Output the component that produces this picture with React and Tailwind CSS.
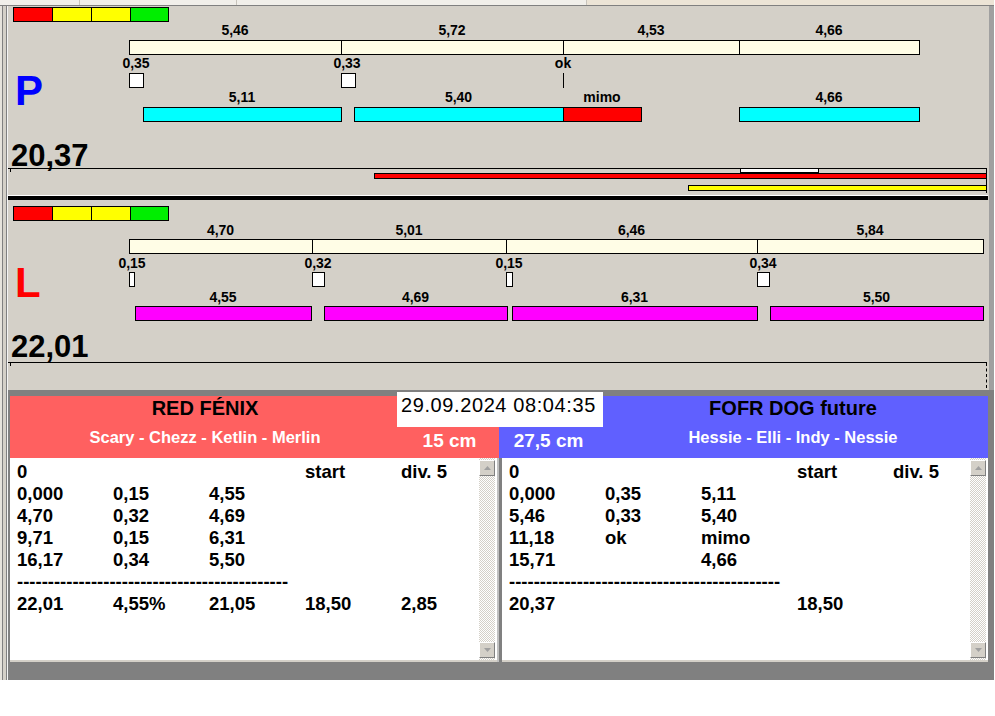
import React from "react";

const FONT = "font-['Liberation_Sans','Arial',sans-serif]";
const px = (x) => x - 8;

const P_DATA = {
  colorTop: 1,
  row1Top: 17,
  creamTop: 34,
  cream: [129, 341, 563, 739, 919],
  creamLabels: ["5,46", "5,72", "4,53", "4,66"],
  row2Top: 50,
  marksTop: 67,
  marks: [
    { c: 136, t: "0,35", x: 129, w: 15 },
    { c: 347, t: "0,33", x: 341, w: 15 },
    { c: 563, t: "ok", x: 563, w: 1, line: true },
  ],
  row3Top: 84,
  barsTop: 101,
  bars: [
    { x1: 143, x2: 341, t: "5,11", c: "bg-[#00ffff]" },
    { x1: 354, x2: 563, t: "5,40", c: "bg-[#00ffff]" },
    { x1: 563, x2: 641, t: "mimo", c: "bg-[#ff0000]" },
    { x1: 739, x2: 919, t: "4,66", c: "bg-[#00ffff]" },
  ],
  letter: "P",
  letterColor: "text-[#0000ff]",
  letterTop: 64,
  total: "20,37",
  totalTop: 134,
};

const L_DATA = {
  colorTop: 6,
  row1Top: 23,
  creamTop: 39,
  cream: [129, 312, 506, 757, 983],
  creamLabels: ["4,70", "5,01", "6,46", "5,84"],
  row2Top: 56,
  marksTop: 72,
  marks: [
    { c: 132, t: "0,15", x: 129, w: 6 },
    { c: 318, t: "0,32", x: 312, w: 13 },
    { c: 509, t: "0,15", x: 506, w: 7 },
    { c: 763, t: "0,34", x: 757, w: 13 },
  ],
  row3Top: 90,
  barsTop: 106,
  bars: [
    { x1: 135, x2: 311, t: "4,55", c: "bg-[#ff00ff]" },
    { x1: 324, x2: 507, t: "4,69", c: "bg-[#ff00ff]" },
    { x1: 512, x2: 757, t: "6,31", c: "bg-[#ff00ff]" },
    { x1: 770, x2: 983, t: "5,50", c: "bg-[#ff00ff]" },
  ],
  letter: "L",
  letterColor: "text-[#ff0000]",
  letterTop: 62,
  total: "22,01",
  totalTop: 131,
};

function Label({ c, top, children }) {
  return (
    <div
      className="absolute w-[120px] text-center text-[14px] leading-none font-bold text-black"
      style={{ left: px(c) - 60, top }}
    >
      {children}
    </div>
  );
}

function ColorScale({ top }) {
  return (
    <div className="absolute left-[5px] flex" style={{ top }}>
      <div className="w-[40px] h-[15px] border border-black bg-[#ff0000]" />
      <div className="w-[40px] h-[15px] border border-black bg-[#ffff00] -ml-px" />
      <div className="w-[40px] h-[15px] border border-black bg-[#ffff00] -ml-px" />
      <div className="w-[39px] h-[15px] border border-black bg-[#00ee00] -ml-px" />
    </div>
  );
}

function Panel({ d, heightClass, children }) {
  const creamSegs = d.cream.slice(0, -1).map((x, i) => ({
    x1: x,
    x2: d.cream[i + 1],
    t: d.creamLabels[i],
  }));
  return (
    <div className={`relative bg-[#d4d0c8] overflow-hidden ${heightClass}`}>
      <ColorScale top={d.colorTop} />
      {creamSegs.map((s, i) => (
        <React.Fragment key={"c" + i}>
          <Label c={(s.x1 + s.x2) / 2} top={d.row1Top}>
            {s.t}
          </Label>
          <div
            className="absolute h-[15px] border border-black bg-[#fffde6]"
            style={{ left: px(s.x1), width: s.x2 - s.x1 + 1, top: d.creamTop }}
          />
        </React.Fragment>
      ))}
      {d.marks.map((m, i) => (
        <React.Fragment key={"m" + i}>
          <Label c={m.c} top={d.row2Top}>
            {m.t}
          </Label>
          {m.line ? (
            <div
              className="absolute w-px h-[15px] bg-black"
              style={{ left: px(m.x), top: d.marksTop }}
            />
          ) : (
            <div
              className="absolute h-[15px] border border-black bg-white"
              style={{ left: px(m.x), width: m.w, top: d.marksTop }}
            />
          )}
        </React.Fragment>
      ))}
      {d.bars.map((b, i) => (
        <React.Fragment key={"b" + i}>
          <Label c={(b.x1 + b.x2) / 2} top={d.row3Top}>
            {b.t}
          </Label>
          <div
            className={`absolute h-[15px] border border-black ${b.c}`}
            style={{ left: px(b.x1), width: b.x2 - b.x1 + 1, top: d.barsTop }}
          />
        </React.Fragment>
      ))}
      <div
        className={`absolute left-[7px] text-[42px] leading-none font-bold ${d.letterColor}`}
        style={{ top: d.letterTop }}
      >
        {d.letter}
      </div>
      <div
        className="absolute left-[3px] text-[31px] leading-none font-bold text-black"
        style={{ top: d.totalTop }}
      >
        {d.total}
      </div>
      {/* timeline box */}
      <div className="absolute left-0 top-[162px] w-[979px] h-px bg-black" />
      <div className="absolute left-[2px] top-[163px] w-px h-[3px] bg-black" />
      {children}
    </div>
  );
}

function Arrow({ up }) {
  return (
    <div className="w-[16px] h-[16px] bg-[#d4d0c8] border border-t-white border-l-white border-r-[#808080] border-b-[#808080] flex items-center justify-center">
      <svg width="7" height="4" viewBox="0 0 7 4">
        {up ? (
          <polygon points="0,4 7,4 3.5,0" fill="#a0a0a0" />
        ) : (
          <polygon points="0,0 7,0 3.5,4" fill="#a0a0a0" />
        )}
      </svg>
    </div>
  );
}

function ScrollBar() {
  return (
    <div className="w-[16px] shrink-0 flex flex-col justify-between py-[2px] bg-[#e9e7e3] bg-[repeating-conic-gradient(#d4d0c8_0_25%,#ffffff_0_50%)] bg-size-[2px_2px]">
      <Arrow up />
      <Arrow />
    </div>
  );
}

const DASHES = "-".repeat(44);

function List({ rows, widthClass }) {
  return (
    <div className={`flex bg-white border-b-2 border-[#d4d0c8] ${widthClass}`}>
      <div className="flex-1 min-w-0 overflow-hidden pl-[7px] pt-[3px] text-[18.5px] font-bold text-black">
        {rows.map((r, i) =>
          r === "dash" ? (
            <div key={i} className="h-[22px] leading-[22px] whitespace-nowrap">
              {DASHES}
            </div>
          ) : (
            <div
              key={i}
              className="grid grid-cols-[96px_96px_96px_96px_96px] h-[22px] leading-[22px] whitespace-nowrap"
            >
              {r.map((c, j) => (
                <div key={j}>{c}</div>
              ))}
            </div>
          )
        )}
      </div>
      <ScrollBar />
      <div className="w-[2px] shrink-0" />
    </div>
  );
}

const LEFT_ROWS = [
  ["0", "", "", "start", "div. 5"],
  ["0,000", "0,15", "4,55"],
  ["4,70", "0,32", "4,69"],
  ["9,71", "0,15", "6,31"],
  ["16,17", "0,34", "5,50"],
  "dash",
  ["22,01", "4,55%", "21,05", "18,50", "2,85"],
];

const RIGHT_ROWS = [
  ["0", "", "", "start", "div. 5"],
  ["0,000", "0,35", "5,11"],
  ["5,46", "0,33", "5,40"],
  ["11,18", "ok", "mimo"],
  ["15,71", "", "4,66"],
  "dash",
  ["20,37", "", "", "18,50"],
];

export default function App() {
  return (
    <div className={`w-[995px] h-[716px] bg-white ${FONT}`}>
      <div className="w-[994px] h-[680px] flex flex-col bg-[#808080]">
        {/* top strip */}
        <div className="h-[6px] bg-[#f1efea] border-b border-[#808080] flex">
          <div className="w-[80px] border-r border-[#c8c4bc]" />
          <div className="w-[157px] border-r border-[#c8c4bc]" />
          <div className="w-[350px] border-r border-[#c8c4bc]" />
          <div className="flex-1 bg-[#ece4d6]" />
        </div>
        <div className="flex flex-1">
          {/* left border */}
          <div className="w-[8px] flex">
            <div className="w-[2px] bg-[#e6e3dc]" />
            <div className="w-px bg-[#808080]" />
            <div className="w-[3px] bg-[#d4d0c8]" />
            <div className="w-px bg-[#808080]" />
            <div className="w-px bg-[#f4f4f4]" />
          </div>
          {/* main column */}
          <div className="w-[980px] flex flex-col">
            <Panel d={P_DATA} heightClass="h-[189px]">
              <div className="absolute left-[366px] top-[167px] w-[613px] h-[6px] border border-black bg-[#ff0000]" />
              <div className="absolute left-[732px] top-[162px] w-[79px] h-[5px] border border-black bg-white" />
              <div className="absolute left-[680px] top-[179px] w-[299px] h-[6px] border border-black bg-[#ffff00]" />
              <div className="absolute left-[978px] top-[162px] w-px h-[25px] bg-black" />
            </Panel>
            <div className="h-px bg-white" />
            <div className="h-[4px] bg-black" />
            <Panel d={L_DATA} heightClass="h-[190px]">
              <div className="absolute left-[978px] top-[163px] h-[25px] border-l border-dashed border-black" />
            </Panel>
            {/* bottom section */}
            <div className="relative flex-1 flex flex-col bg-[#808080] pl-[2px] pt-[6px]">
              <div className="flex h-[62px]">
                <div className="w-[489px] bg-[#ff6060] flex">
                  <div className="w-[390px] flex flex-col items-center">
                    <div className="mt-[2px] text-[20px] leading-none font-bold text-black whitespace-nowrap">
                      RED FÉNIX
                    </div>
                    <div className="mt-[11px] text-[16.5px] leading-none font-bold text-white whitespace-nowrap">
                      Scary - Chezz - Ketlin - Merlin
                    </div>
                  </div>
                  <div className="w-[99px] pt-[35px] text-center text-[19px] leading-none font-bold text-white whitespace-nowrap">
                    15 cm
                  </div>
                </div>
                <div className="w-[489px] bg-[#6060ff] flex">
                  <div className="w-[99px] pt-[35px] text-center text-[19px] leading-none font-bold text-white whitespace-nowrap">
                    27,5 cm
                  </div>
                  <div className="w-[390px] flex flex-col items-center">
                    <div className="mt-[2px] text-[20px] leading-none font-bold text-black whitespace-nowrap">
                      FOFR DOG future
                    </div>
                    <div className="mt-[11px] text-[16.5px] leading-none font-bold text-white whitespace-nowrap">
                      Hessie - Elli - Indy - Nessie
                    </div>
                  </div>
                </div>
              </div>
              <div className="flex h-[204px]">
                <List rows={LEFT_ROWS} widthClass="w-[487px]" />
                <div className="w-[5px] flex">
                  <div className="w-[2px] bg-[#c0c0c0]" />
                  <div className="flex-1 bg-[#808080]" />
                </div>
                <List rows={RIGHT_ROWS} widthClass="w-[486px]" />
              </div>
              <div className="absolute left-[389px] top-[2px] w-[206px] h-[35px] bg-white pl-[4px] pt-[3px] text-[20px] leading-none tracking-[0.6px] text-black whitespace-nowrap">
                29.09.2024 08:04:35
              </div>
            </div>
          </div>
          {/* right border */}
          <div className="w-[6px] flex flex-col">
            <div className="h-[384px] bg-[#a0a0a0] border-l border-[#d4d0c8]" />
            <div className="flex-1 bg-[#808080]" />
          </div>
        </div>
      </div>
    </div>
  );
}
